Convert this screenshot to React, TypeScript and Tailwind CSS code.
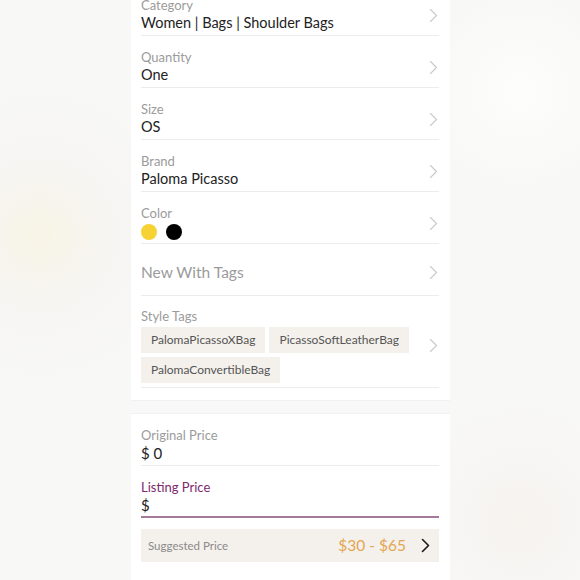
type Row = { label: string; value?: string; kind?: "text" | "colors" | "placeholder" };

const rows: Row[] = [
  { label: "Category", value: "Women | Bags | Shoulder Bags" },
  { label: "Quantity", value: "One" },
  { label: "Size", value: "OS" },
  { label: "Brand", value: "Paloma Picasso" },
  { label: "Color", kind: "colors" },
  { label: "New With Tags", kind: "placeholder" },
];

const tags = ["PalomaPicassoXBag", "PicassoSoftLeatherBag", "PalomaConvertibleBag"];

function Chevron({ dark = false }: { dark?: boolean }) {
  return (
    <svg width="9" height="15" viewBox="0 0 9 15" className="shrink-0 mr-[1px]">
      <polyline
        points="1.5,1.5 7.5,7.5 1.5,13.5"
        fill="none"
        stroke={dark ? "#1a1a1a" : "#c9c9c9"}
        strokeWidth={dark ? 1.6 : 1.1}
        strokeLinecap="round"
        strokeLinejoin="round"
      />
    </svg>
  );
}

function DetailRow({ row }: { row: Row }) {
  if (row.kind === "placeholder") {
    return (
      <div className="flex items-center h-[52px] border-b border-[#ececec] pt-[6px]">
        <span className="flex-1 text-[15.5px] text-[#9b9b9b]">{row.label}</span>
        <Chevron />
      </div>
    );
  }
  return (
    <div className="flex items-center h-[52px] border-b border-[#ececec] pt-[13px] pb-[2px]">
      <div className="flex-1 flex flex-col">
        <span className="text-[13px] leading-4 text-[#9b9b9b]">{row.label}</span>
        {row.kind === "colors" ? (
          <div className="flex items-center gap-[9px] h-5 pt-[1px]">
            <span className="w-4 h-4 rounded-full bg-[#f7d235]" />
            <span className="w-4 h-4 rounded-full bg-black" />
          </div>
        ) : (
          <span className="text-[14.5px] leading-5 text-[#222]">{row.value}</span>
        )}
      </div>
      <Chevron />
    </div>
  );
}

export default function App() {
  return (
    <div
      className="w-[580px] h-[580px] overflow-hidden flex justify-center bg-[#f8f8f7] bg-[radial-gradient(circle_at_40px_235px,#f8f4e6_0px,#f6f5f2_70px,transparent_150px),radial-gradient(circle_at_520px_90px,#fdfdfc_0px,transparent_100px),radial-gradient(circle_at_520px_520px,#f6f3ef_0px,transparent_120px)]"
      style={{ fontFamily: "Lato, 'Open Sans', sans-serif" }}
    >
      <div className="w-[319px] h-full bg-white ml-[1px] flex flex-col">
        {/* top section */}
        <div className="pl-[10px] pr-[11px] -mt-4">
          {rows.map((r) => (
            <DetailRow key={r.label} row={r} />
          ))}
          <div className="flex items-center border-b border-[#ececec] pt-3 pb-[4px]">
            <div className="flex-1 flex flex-col">
              <span className="text-[13px] leading-4 text-[#9b9b9b] mb-[3px]">Style Tags</span>
              <div className="flex flex-wrap gap-1">
                {tags.map((t) => (
                  <span key={t} className="h-[26px] px-[10px] flex items-center bg-[#f4f1ec] text-[12px] text-[#555]">
                    {t}
                  </span>
                ))}
              </div>
            </div>
            <Chevron />
          </div>
        </div>
        <div className="h-[14px] mt-[12px] bg-[#f8f8f8] border-y border-[#f1f1f1]" />

        {/* price section */}
        <div className="pl-[10px] pr-[11px]">
          <div className="flex flex-col h-[52px] border-b border-[#ececec] pt-[13px]">
            <span className="text-[13px] leading-4 text-[#9b9b9b]">Original Price</span>
            <span className="text-[15px] leading-5 text-[#222]">$ 0</span>
          </div>
          <div className="flex flex-col h-[52px] border-b-2 border-[#a47a9b] pt-[13px]">
            <span className="text-[13px] leading-4 text-[#7b2a6c]">Listing Price</span>
            <span className="text-[15px] leading-5 text-[#222]">$</span>
          </div>
          <div className="mt-[11px] h-[33px] bg-[#f4f1ec] flex items-center pl-[7px] pr-[8px]">
            <span className="flex-1 text-[11.5px] text-[#8a8a8a]">Suggested Price</span>
            <span className="text-[15.5px] text-[#e3a653] mr-[15px]">$30 - $65</span>
            <Chevron dark />
          </div>
        </div>
      </div>
    </div>
  );
}
